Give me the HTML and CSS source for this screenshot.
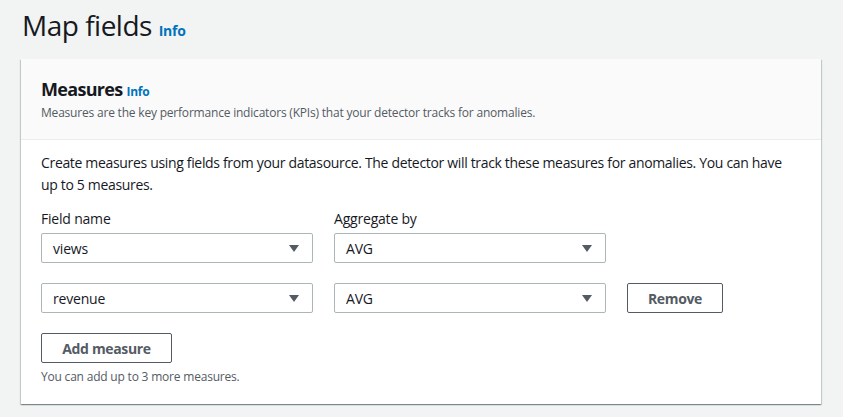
FILE: index.html
```html
<!DOCTYPE html>
<html lang="en">
<head>
<meta charset="utf-8">
<link rel="stylesheet" href="styles.css">
</head>
<body>
<div class="page">
  <h1 class="title">Map fields <a class="info info-lg" href="#">Info</a></h1>
  <section class="card">
    <header class="card-header">
      <h2 class="card-title">Measures <a class="info" href="#">Info</a></h2>
      <p class="card-desc">Measures are the key performance indicators (KPIs) that your detector tracks for anomalies.</p>
    </header>
    <div class="card-body">
      <p class="intro">Create measures using fields from your datasource. The detector will track these measures for anomalies. You can have up to 5 measures.</p>
      <div class="grid">
        <div class="label">Field name</div>
        <div class="label">Aggregate by</div>
        <div></div>
        <div class="select"><span>views</span><svg class="caret" width="10" height="7" viewBox="0 0 10 7"><path d="M0 0h10L5 7z"/></svg></div>
        <div class="select"><span>AVG</span><svg class="caret" width="10" height="7" viewBox="0 0 10 7"><path d="M0 0h10L5 7z"/></svg></div>
        <div></div>
        <div class="select row2"><span>revenue</span><svg class="caret" width="10" height="7" viewBox="0 0 10 7"><path d="M0 0h10L5 7z"/></svg></div>
        <div class="select row2"><span>AVG</span><svg class="caret" width="10" height="7" viewBox="0 0 10 7"><path d="M0 0h10L5 7z"/></svg></div>
        <button class="btn remove row2">Remove</button>
      </div>
      <button class="btn add">Add measure</button>
      <p class="hint">You can add up to 3 more measures.</p>
    </div>
  </section>
</div>
</body>
</html>
```

FILE: styles.css
```css
* { box-sizing: border-box; }
html, body { margin: 0; padding: 0; }
body {
  background: #f2f3f3;
  font-family: "Open Sans", "Noto Sans", Arial, sans-serif;
  color: #16191f;
  width: 843px;
  height: 417px;
  overflow: hidden;
}
.page { padding: 0 22px 0 21px; }
.title {
  margin: 0;
  padding: 5px 0 0 1px;
  height: 59px;
  font-size: 28px;
  font-weight: 400;
  line-height: 40px;
  letter-spacing: -0.5px;
}
.info {
  color: #0073bb;
  font-weight: 700;
  font-size: 12px;
  text-decoration: none;
  letter-spacing: -0.2px;
}
.info-lg { font-size: 14px; }
.card {
  width: 800px;
  background: #fff;
  box-shadow: 0 1px 1px 0 rgba(0,28,36,.3), 1px 1px 1px 0 rgba(0,28,36,.15), -1px 1px 1px 0 rgba(0,28,36,.15);
}
.card-header {
  background: #fafafa;
  border-bottom: 1px solid #eaeded;
  padding: 17px 20px 18px;
}
.card-title {
  margin: 0;
  font-size: 18px;
  font-weight: 700;
  line-height: 26px;
  letter-spacing: -0.7px;
}
.card-desc {
  margin: 0;
  font-size: 12px;
  line-height: 16px;
  color: #545b64;
  letter-spacing: -0.2px;
}
.card-body { padding: 12px 20px 19px; }
.intro {
  margin: 0;
  font-size: 14px;
  line-height: 22px;
  letter-spacing: -0.33px;
}
.grid {
  display: grid;
  grid-template-columns: 272px 272px 96px;
  column-gap: 21px;
  margin-top: 12px;
}
.label {
  font-size: 14px;
  line-height: 22px;
  margin-bottom: 3px;
  letter-spacing: -0.2px;
}
.select {
  height: 30px;
  border: 1px solid #aab7b8;
  border-radius: 2px;
  display: flex;
  align-items: center;
  justify-content: space-between;
  padding: 0 13px 0 11px;
  font-size: 14px;
  letter-spacing: -0.2px;
}
.caret { fill: #545b64; }
.row2 { margin-top: 20px; }
.btn {
  height: 30px;
  background: #fff;
  border: 1px solid #545b64;
  border-radius: 2px;
  color: #545b64;
  font-family: inherit;
  font-weight: 700;
  font-size: 14px;
  padding: 0;
  letter-spacing: -0.35px;
}
.remove { width: 96px; }
.add { width: 131px; margin-top: 20px; display: block; }
.hint {
  margin: 6px 0 0;
  font-size: 12px;
  line-height: 16px;
  color: #545b64;
  letter-spacing: -0.2px;
}
```
